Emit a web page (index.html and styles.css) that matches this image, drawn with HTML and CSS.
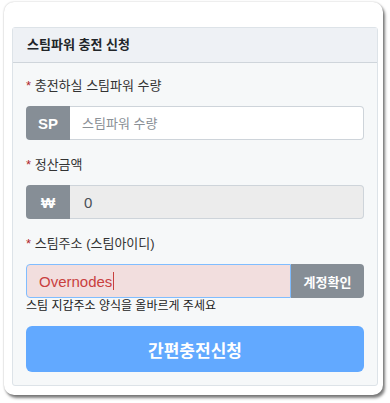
FILE: index.html
```html
<!DOCTYPE html>
<html lang="ko">
<head>
    <meta charset="UTF-8">
    <meta name="viewport" content="width=device-width, initial-scale=1.0">
    <title>스팀파워 충전 신청</title>
    <link rel="stylesheet" href="styles.css">
</head>
<body>

<div class="wrap">
    <div class="card">
        <div class="card-header">스팀파워 충전 신청</div>
        <div class="card-body">
            <div class="field">
                <label class="field-label"><span class="req">*</span> 충전하실 스팀파워 수량</label>
                <div class="input-group">
                    <span class="addon">SP</span>
                    <input class="input" type="text" placeholder="스팀파워 수량">
                </div>
            </div>

            <div class="field">
                <label class="field-label"><span class="req">*</span> 정산금액</label>
                <div class="input-group">
                    <span class="addon">₩</span>
                    <input class="input input-num" type="text" value="0" disabled>
                </div>
            </div>

            <div class="field field-last">
                <label class="field-label"><span class="req">*</span> 스팀주소 (스팀아이디)</label>
                <div class="input-group">
                    <div class="input input-error">Overnodes<span class="caret"></span></div>
                    <button class="append-btn">계정확인</button>
                </div>
                <div class="help">스팀 지갑주소 양식을 올바르게 주세요</div>
            </div>

            <button class="submit">간편충전신청</button>
        </div>
    </div>
</div>

</body>
</html>
```

FILE: styles.css
```css
body {
    margin: 0;
    background: #fff;
    font-family: "Liberation Sans", "Noto Sans CJK KR", sans-serif;
    color: #212529;
}
.wrap {
    margin: 2px 7px 8px 4px;
    height: 393px;
    box-sizing: border-box;
    padding: 25px 5px 0 8px;
    background: #fff;
    border-radius: 10px;
    box-shadow: 2px 3px 3px rgba(0, 0, 0, 0.5), 0 0 2px rgba(0, 0, 0, 0.25);
}
.card {
    background: #f6f8f9;
    border: 1px solid #dde3e8;
    border-radius: 3px;
}
.card-header {
    height: 34px;
    line-height: 34px;
    padding: 0 14px;
    background: #eef1f5;
    border-bottom: 1px solid #cfd5db;
    font-size: 13px;
    font-weight: bold;
}
.card-body {
    padding: 13px 13px 13px 13px;
}
.field {
    margin-bottom: 15px;
}
.field-last {
    margin-bottom: 12px;
}
.field-label {
    display: block;
    height: 20px;
    line-height: 20px;
    margin-bottom: 10px;
    font-size: 13px;
    color: #333;
}
.req {
    color: #b0262b;
}
.input-group {
    display: flex;
    height: 34px;
}
.addon {
    width: 44px;
    flex: none;
    display: flex;
    align-items: center;
    justify-content: center;
    background: #868e96;
    color: #fff;
    font-weight: bold;
    font-size: 15px;
    border-radius: 4px 0 0 4px;
}
.input {
    flex: 1;
    min-width: 0;
    box-sizing: border-box;
    height: 34px;
    padding: 0 12px;
    border: 1px solid #ced4da;
    border-left: none;
    border-radius: 0 4px 4px 0;
    background: #fff;
    font-family: inherit;
    font-size: 13px;
    color: #495057;
}
.input::placeholder {
    color: #8a9096;
}
.input:disabled {
    background: #ececec;
}
.input-num {
    font-size: 15px;
    padding-left: 14px;
}
.input-error {
    display: flex;
    align-items: center;
    border: 1px solid #80bdff;
    border-radius: 4px 0 0 4px;
    background: #f2dede;
    color: #c9403f;
    font-size: 15px;
}
.caret {
    display: inline-block;
    width: 1px;
    height: 18px;
    margin-left: 1px;
    background: #c9403f;
}
.append-btn {
    width: 73px;
    flex: none;
    border: none;
    border-radius: 0 4px 4px 0;
    background: #868e96;
    color: #fff;
    font-family: inherit;
    font-weight: bold;
    font-size: 13px;
}
.help {
    height: 16px;
    line-height: 16px;
    font-size: 12px;
    color: #222;
}
.submit {
    display: block;
    width: 100%;
    height: 46px;
    border: none;
    border-radius: 6px;
    background: #62a9ff;
    color: #fff;
    font-family: inherit;
    font-weight: bold;
    font-size: 17px;
}
```
